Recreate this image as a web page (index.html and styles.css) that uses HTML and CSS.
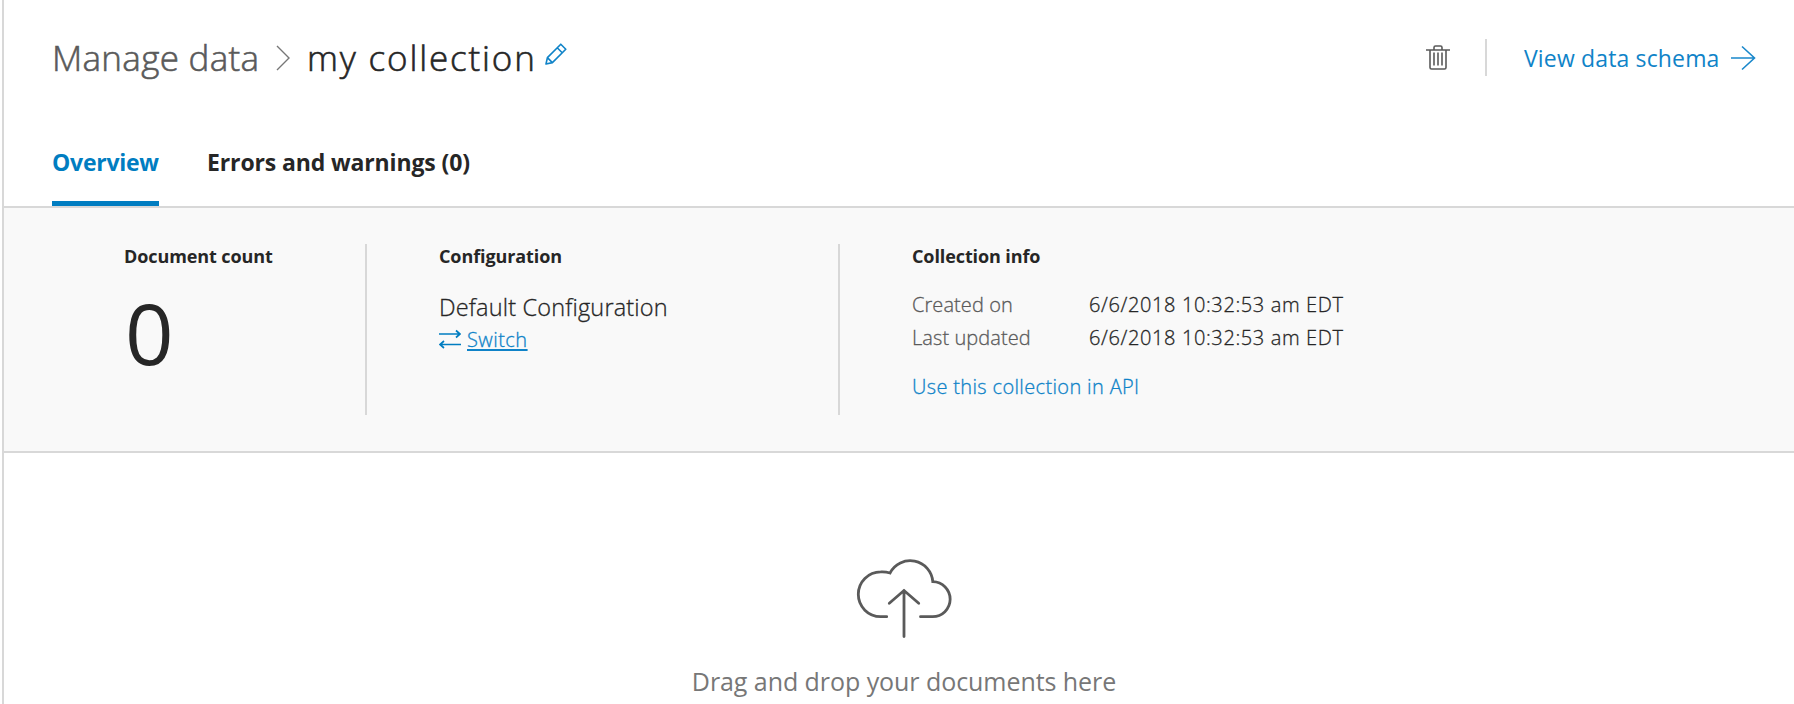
FILE: index.html
```
<!DOCTYPE html>
<html lang="en">
<head>
<meta charset="utf-8">
<title>my collection</title>
<link rel="stylesheet" href="styles.css">
</head>
<body>
<main class="page">
  <header class="header">
    <nav class="breadcrumb">
      <a class="crumb">Manage data</a>
      <svg class="chevron" width="14" height="26" viewBox="0 0 14 26"><path d="M1 1l12 12L1 25"/></svg>
      <h1 class="title">my collection</h1>
      <svg class="pencil" width="22" height="22" viewBox="0 0 22 22"><path d="M1 21l1.400-6.400L15.800 1.200l5 5L7.400 19.600zM12.200 4.800l5 5M2.400 14.600l5 5"/></svg>
    </nav>
    <div class="actions">
      <svg class="trash" width="24" height="26" viewBox="0 0 24 26"><path d="M0 5h24M4 5v17.500q0 1.500 1.500 1.500h13q1.500 0 1.500-1.500V5M8 5V2.500Q8 1 9.500 1h5Q16 1 16 2.500V5M8 7.500v13M12 7.500v13M16 7.500v13"/></svg>
      <span class="separator"></span>
      <a class="schema">View data schema</a>
      <svg class="arrow" width="25" height="26" viewBox="0 0 25 26"><path d="M0 13h23.500M11 1.500L23.500 13 11 24.500"/></svg>
    </div>
  </header>
  <nav class="tabs">
    <a class="tab tab-active">Overview</a>
    <a class="tab">Errors and warnings (0)</a>
  </nav>
  <section class="summary">
    <div class="card card-count">
      <h2 class="heading">Document count</h2>
      <div class="count">0</div>
    </div>
    <div class="card card-config">
      <h2 class="heading">Configuration</h2>
      <div class="config-name">Default Configuration</div>
      <div class="switch">
        <svg class="swap" width="22" height="20" viewBox="0 0 22 20"><path d="M0 5h21M17 1.500L21 5l-4 3.500M22 15.500H1M5 12l-4 3.500L5 19"/></svg>
        <a class="switch-link">Switch</a>
      </div>
    </div>
    <div class="card card-info">
      <h2 class="heading">Collection info</h2>
      <dl class="facts">
        <dt>Created on</dt><dd>6/6/2018 10:32:53 am EDT</dd>
        <dt>Last updated</dt><dd>6/6/2018 10:32:53 am EDT</dd>
      </dl>
      <a class="api">Use this collection in API</a>
    </div>
  </section>
  <section class="drop">
    <svg class="cloud" width="96" height="82" viewBox="176 17 96 82"><path d="M206.700 76.700H200.700A22.400 22.400 0 0 1 200.700 31.900Q205.500 31.600 210 33A22.700 22.700 0 0 1 252.800 41.700A17.500 17.500 0 0 1 252.500 76.700H240.500M224 96.500V50.500M209.300 63.300L224 50.500l14.700 12.800"/></svg>
    <p class="drop-text">Drag and drop your documents here</p>
  </section>
</main>
</body>
</html>
```
FILE: styles.css
```
* { box-sizing: border-box; margin: 0; padding: 0; }
body {
  font-family: "Open Sans", "Noto Sans", sans-serif;
  color: #262626;
  background: #fff;
  height: 704px;
  overflow: hidden;
  white-space: nowrap;
}
svg { fill: none; flex: none; display: block; }
.page { margin-left: 2px; border-left: 2px solid #d8d8d8; height: 704px; }

.header { display: flex; justify-content: space-between; height: 115px; padding: 0 38px 0 48px; }
.breadcrumb, .actions { display: flex; align-items: center; }
.crumb, .title { font-size: 35px; font-weight: 300; line-height: 48px; -webkit-text-stroke: .6px currentColor; }
.crumb { color: #5a5a5a; width: 224px; letter-spacing: .3px; }
.title { color: #262626; letter-spacing: 1.85px; width: 238px; }
.chevron { stroke: #777; stroke-width: 1.4; margin-right: 17px; }
.pencil { stroke: #0f83c8; stroke-width: 1.6; stroke-linejoin: round; margin-bottom: 8px; }
.trash { stroke: #5a5a5a; stroke-width: 1.6; margin-right: 35px; }
.separator { width: 2px; height: 37px; background: #d8d8d8; margin-right: 37px; }
.schema { color: #0f83c8; font-size: 23px; line-height: 32px; letter-spacing: .15px; width: 207px; }
.arrow { stroke: #1a88cb; stroke-width: 1.6; }

.tabs { display: flex; gap: 48px; height: 93px; padding-left: 48px; border-bottom: 2px solid #d8d8d8; }
.tab { font-size: 23px; font-weight: 700; line-height: 30px; letter-spacing: -.13px; padding: 32px 0 24px; border-bottom: 5px solid transparent; }
.tab-active { color: #007dc1; border-color: #007dc1; width: 107px; letter-spacing: -.25px; }

.summary { display: flex; height: 245px; padding: 36px 0; background: #f9f9f9; border-bottom: 2px solid #d8d8d8; }
.card { height: 171px; }
.card-count { width: 363px; padding-left: 120px; border-right: 2px solid #d8d8d8; }
.card-config { width: 473px; padding-left: 72px; border-right: 2px solid #d8d8d8; }
.card-info { padding-left: 72px; }
.heading { font-size: 18px; font-weight: 700; line-height: 24px; letter-spacing: -.1px; }
.count { font-size: 85px; line-height: 90px; margin-top: 19px; padding-left: 1px; }
.config-name, .switch-link, .facts, .api { font-weight: 300; -webkit-text-stroke: .3px currentColor; }
.config-name { font-size: 23.5px; line-height: 30px; letter-spacing: .17px; margin-top: 24px; }
.switch { display: flex; align-items: center; gap: 6px; height: 30px; margin-top: 2px; }
.swap { stroke: #007dc1; stroke-width: 1.7; }
.switch-link { color: #0f83c8; font-size: 20px; line-height: 30px; letter-spacing: .45px; text-decoration: underline; text-decoration-thickness: 2px; text-underline-offset: 2px; padding-top: 1px; }
.facts { display: grid; grid-template-columns: 177px auto; margin-top: 20px; font-size: 20px; line-height: 33px; }
.facts dt { color: #5a5a5a; letter-spacing: .08px; }
.facts dd { letter-spacing: .62px; }
.api { display: block; color: #0f83c8; font-size: 20px; line-height: 33px; letter-spacing: .35px; margin-top: 16px; }

.drop { display: flex; flex-direction: column; align-items: center; padding: 104px 0 0 10px; }
.cloud { stroke: #5a5a5a; stroke-width: 2.8; stroke-linecap: round; }
.drop-text { color: #777; font-size: 25px; line-height: 34px; letter-spacing: -.06px; margin-top: 25px; }
```
